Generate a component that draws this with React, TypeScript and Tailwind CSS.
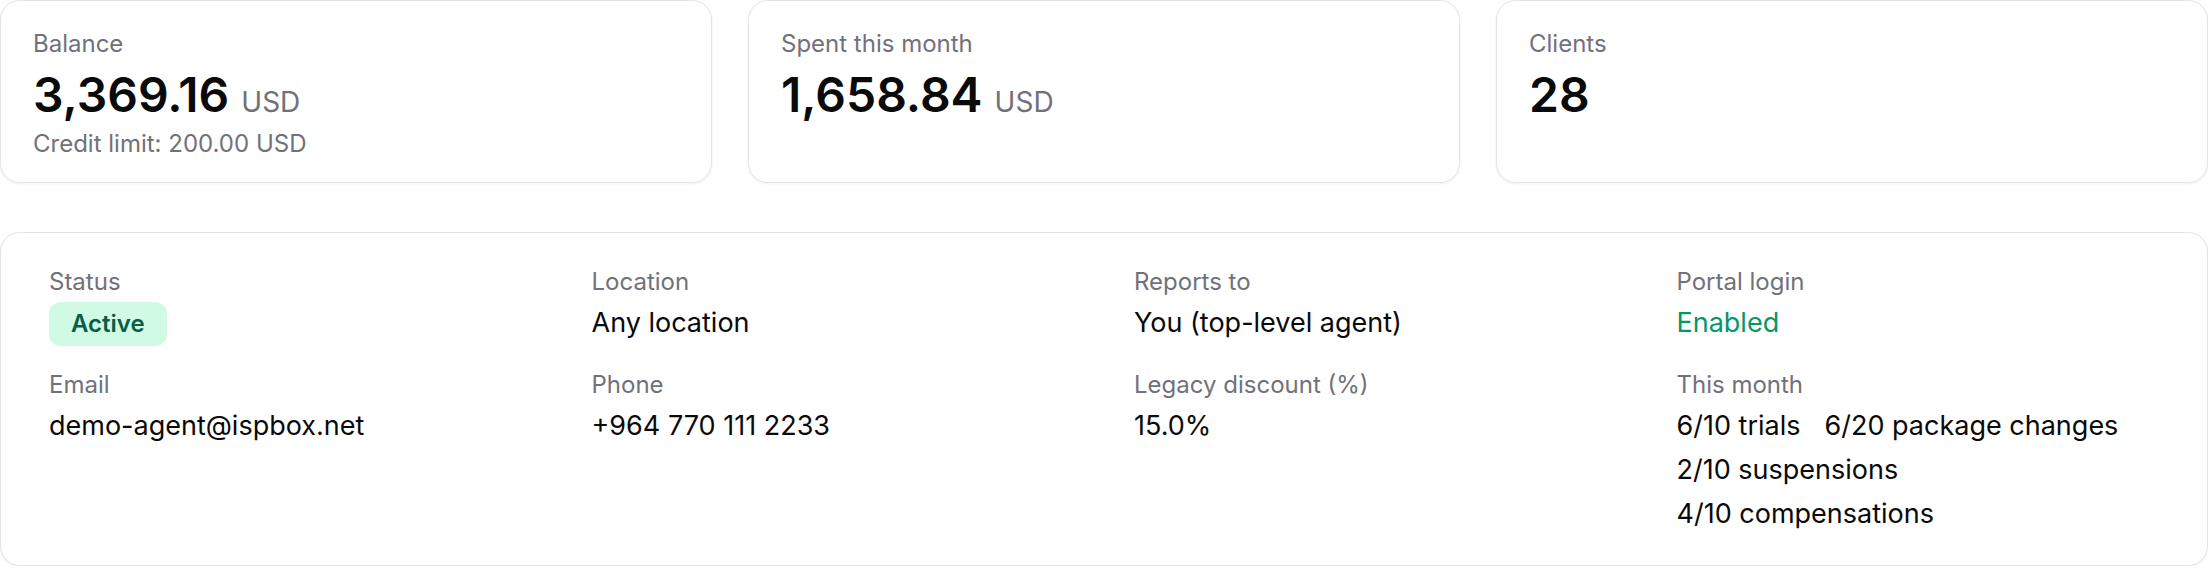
import React from 'react';

type Stat = { label: string; value: string; unit?: string; note?: string };

const stats: Stat[] = [
  { label: 'Balance', value: '3,369.16', unit: 'USD', note: 'Credit limit: 200.00 USD' },
  { label: 'Spent this month', value: '1,658.84', unit: 'USD' },
  { label: 'Clients', value: '28' },
];

const card = 'rounded-[20px] border border-[#e4e4e7] bg-white shadow-[0_1px_3px_rgba(0,0,0,0.06)]';
const label = 'text-[24px] leading-[30px] text-[#71717a]';
const value = 'mt-[8px] text-[27px] leading-[36px] text-[#0a0a0a]';

function StatCard({ stat }: { stat: Stat }) {
  return (
    <div className={`${card} px-[32px] pt-[28px] pb-[23px]`}>
      <div className={label}>{stat.label}</div>
      <div className="mt-[9px] text-[48px] leading-[54px] font-semibold text-[#0a0a0a]">
        {stat.value}
        {stat.unit && <span className="ml-[12px] text-[28px] leading-none font-normal text-[#71717a]">{stat.unit}</span>}
      </div>
      {stat.note && <div className={`mt-[7px] ${label}`}>{stat.note}</div>}
    </div>
  );
}

function Field({ title, children }: { title: string; children: React.ReactNode }) {
  return (
    <div>
      <div className={label}>{title}</div>
      {children}
    </div>
  );
}

export default function App() {
  return (
    <div className="w-[2208px] bg-white font-['Inter',sans-serif]">
      <div className="grid grid-cols-3 gap-9">
        {stats.map(s => <StatCard key={s.label} stat={s} />)}
      </div>

      <div className={`${card} mt-[49px] grid grid-cols-4 gap-x-[60px] gap-y-[24px] px-[48px] pt-[34px] pb-[33px]`}>
        <Field title="Status">
          <span className="mt-[5px] inline-flex items-center rounded-[12px] bg-[#d1fae5] px-[22px] py-[7px] text-[24px] leading-[30px] font-semibold text-[#065f46]">
            Active
          </span>
        </Field>
        <Field title="Location">
          <div className={value}>Any location</div>
        </Field>
        <Field title="Reports to">
          <div className={value}>You (top-level agent)</div>
        </Field>
        <Field title="Portal login">
          <div className={`${value} !text-[#059669]`}>Enabled</div>
        </Field>

        <Field title="Email">
          <div className={value}>demo-agent@ispbox.net</div>
        </Field>
        <Field title="Phone">
          <div className={value}>+964 770 111 2233</div>
        </Field>
        <Field title="Legacy discount (%)">
          <div className={value}>15.0%</div>
        </Field>
        <Field title="This month">
          <div className="mt-[8px] flex flex-wrap gap-x-[24px] gap-y-[8px] text-[27px] leading-[36px] text-[#0a0a0a]">
            <span>6/10 trials</span>
            <span>6/20 package changes</span>
            <span>2/10 suspensions</span>
            <span>4/10 compensations</span>
          </div>
        </Field>
      </div>
    </div>
  );
}
